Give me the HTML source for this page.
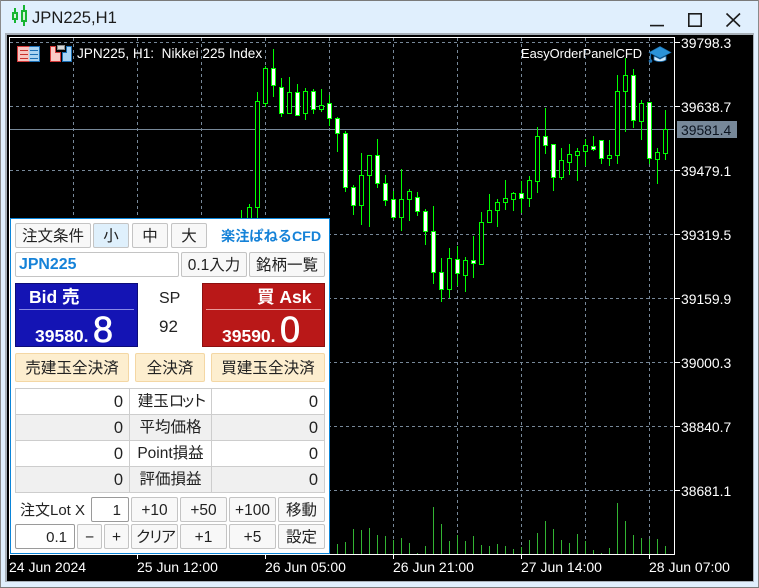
<!DOCTYPE html>
<html lang="ja"><head><meta charset="utf-8"><title>JPN225,H1</title>
<style>
html,body{margin:0;padding:0}
body{width:759px;height:588px;position:relative;overflow:hidden;background:#e0effd;font-family:"Liberation Sans","Noto Sans CJK JP",sans-serif;color:#222}
div{box-sizing:border-box}
.a{position:absolute}
.t{position:absolute;white-space:nowrap;line-height:16px}
.b{position:absolute;display:flex;align-items:center;justify-content:center;background:#f8f8f8;border:1px solid #c4c4c4;border-radius:2px;font-size:15.5px;line-height:1;white-space:nowrap;color:#222;padding-top:2px}
.o{background:#fdeecf;border-color:#f4d7a4;font-size:15.6px}
.c{position:absolute;border:1px solid #cdcdcd;display:flex;align-items:center;font-size:16.5px;line-height:1;white-space:nowrap;color:#222;padding-top:2px}
.n{justify-content:flex-end;padding-right:6px}
.l{justify-content:center;font-size:15.5px;padding-top:1px}
.g{background:#f0f0f0}
.w{background:#fff}
.i{position:absolute;background:#fff;border:1px solid #9a9a9a;border-radius:2px;display:flex;align-items:center;justify-content:flex-end;padding-right:7px;padding-top:2px;font-size:15px;line-height:1;color:#222}
.px{color:#fff;font-size:13.9px}
.dt{color:#fff;font-size:14px}
</style></head>
<body>
<div class="a" style="left:0;top:0;width:759px;height:1px;background:#7a7a7a"></div>
<div class="a" style="left:0;top:0;width:1px;height:588px;background:#8a8a8a"></div>
<div class="a" style="left:758px;top:0;width:1px;height:588px;background:#8a8a8a"></div>
<div class="a" style="left:0;top:587px;width:759px;height:1px;background:#7a7a7a"></div>

<svg class="a" style="left:0;top:0" width="759" height="33" viewBox="0 0 759 33" shape-rendering="crispEdges">
<path d="M15 8V23M24 5V26" stroke="#17b532" stroke-width="2" fill="none"/>
<rect x="13" y="13" width="4" height="6" fill="#d6f5da" stroke="#17b532" stroke-width="2"/>
<rect x="22" y="11" width="4" height="10" fill="#d6f5da" stroke="#17b532" stroke-width="2"/>
<g shape-rendering="geometricPrecision" fill="none" stroke="#1c1c1c" stroke-width="1.6">
<path d="M650 25.6H664"/>
<rect x="688.8" y="13.8" width="12.4" height="12.4"/>
<path d="M726.5 13.5L740 26.5M740 13.5L726.5 26.5"/>
</g>
</svg>
<div class="t" style="left:32px;top:8px;font-size:16.6px;line-height:19px;color:#1c1c1c">JPN225,H1</div>

<div class="a" style="left:5px;top:33px;width:749px;height:549px;background:#a8b0b8"></div>
<div class="a" style="left:7px;top:35px;width:746px;height:546px;background:#000"></div>

<svg class="a" style="left:0;top:0" width="759" height="588" viewBox="0 0 759 588" shape-rendering="crispEdges">
<path d="M10 42.5H674M10 106.5H674M10 170.5H674M10 234.5H674M10 298.5H674M10 362.5H674M10 426.5H674M10 490.5H674" stroke="#778899" stroke-dasharray="3 3" fill="none"/>
<path d="M73.5 38V554M137.5 38V554M201.5 38V554M265.5 38V554M329.5 38V554M393.5 38V554M457.5 38V554M521.5 38V554M585.5 38V554M649.5 38V554" stroke="#778899" stroke-dasharray="3 3" fill="none"/>
<path d="M10 129.5H675" stroke="#778899" fill="none"/>
<path d="M337.5 554V544M345.5 554V542M353.5 554V529M361.5 554V530M369.5 554V528M377.5 554V535M385.5 554V536M393.5 554V540M401.5 554V538M409.5 554V543M417.5 554V553M425.5 554V546M433.5 554V507M441.5 554V524M449.5 554V541M457.5 554V535M465.5 554V541M473.5 554V536M481.5 554V545M489.5 554V546M497.5 554V544M505.5 554V546M513.5 554V549M521.5 554V547M529.5 554V540M537.5 554V533M545.5 554V521M553.5 554V529M561.5 554V540M569.5 554V543M577.5 554V534M585.5 554V541M593.5 554V550M601.5 554V553M609.5 554V548M617.5 554V503M625.5 554V521M633.5 554V535M641.5 554V538M649.5 554V539M657.5 554V539M665.5 554V546" stroke="#32b432" fill="none"/>
<path d="M241.5 210V220M249.5 204V220M257.5 92V220M265.5 66V107M273.5 49V97M281.5 78V117M289.5 77V114M297.5 84V116M305.5 88V120M313.5 89V114M321.5 89V112M329.5 95V126M337.5 117V152M345.5 131V192M353.5 185V215M361.5 153V225M369.5 155V227M377.5 139V188M385.5 175V206M393.5 191V220M401.5 169V231M409.5 189V221M417.5 192V216M425.5 209V245M433.5 206V284M441.5 258V302M449.5 248V298M457.5 246V286M465.5 257V292M473.5 236V278M481.5 212V264M489.5 194V222M497.5 199V227M505.5 180V210M513.5 192V211M521.5 181V213M529.5 176V207M537.5 127V193M545.5 108V154M553.5 144V191M561.5 148V180M569.5 144V175M577.5 148V181M585.5 139V166M593.5 136V151M601.5 140V164M609.5 140V166M617.5 75V164M625.5 58V132M633.5 69V128M641.5 100V140M649.5 102V164M657.5 148V184M665.5 110V160" stroke="#00ff00" fill="none"/>
<path d="M247.5 207.5h4V220h-4zM255.5 101.5h4V207.5h-4zM263.5 68.5h4V103.5h-4zM287.5 92.5h4V113.5h-4zM303.5 91.5h4V113.5h-4zM319.5 105.5h4V109.5h-4zM359.5 175.5h4V205.5h-4zM367.5 155.5h4V175.5h-4zM399.5 199.5h4V217.5h-4zM407.5 191.5h4V199.5h-4zM447.5 258.5h4V289.5h-4zM463.5 260.5h4V275.5h-4zM479.5 222.5h4V264.5h-4zM487.5 210.5h4V222.5h-4zM495.5 202.5h4V210.5h-4zM503.5 198.5h4V202.5h-4zM511.5 193.5h4V199.5h-4zM527.5 180.5h4V198.5h-4zM535.5 136.5h4V181.5h-4zM559.5 160.5h4V177.5h-4zM567.5 154.5h4V162.5h-4zM575.5 151.5h4V155.5h-4zM583.5 145.5h4V151.5h-4zM607.5 155.5h4V158.5h-4zM615.5 91.5h4V155.5h-4zM623.5 75.5h4V91.5h-4zM639.5 103.5h4V121.5h-4zM655.5 152.5h4V159.5h-4zM663.5 129.5h4V153.5h-4z" fill="#000" stroke="#00ff00"/>
<path d="M271.5 68.5h4V85.5h-4zM279.5 87.5h4V113.5h-4zM295.5 92.5h4V115.5h-4zM311.5 91.5h4V109.5h-4zM327.5 103.5h4V118.5h-4zM335.5 118.5h4V133.5h-4zM343.5 133.5h4V187.5h-4zM351.5 187.5h4V205.5h-4zM375.5 155.5h4V183.5h-4zM383.5 183.5h4V200.5h-4zM391.5 199.5h4V217.5h-4zM415.5 197.5h4V211.5h-4zM423.5 211.5h4V231.5h-4zM431.5 231.5h4V272.5h-4zM439.5 272.5h4V289.5h-4zM455.5 259.5h4V273.5h-4zM471.5 260.5h4V263.5h-4zM519.5 193.5h4V198.5h-4zM543.5 136.5h4V145.5h-4zM551.5 144.5h4V177.5h-4zM591.5 146.5h4V149.5h-4zM599.5 140.5h4V158.5h-4zM631.5 75.5h4V120.5h-4zM647.5 102.5h4V158.5h-4z" fill="#fff" stroke="#00ff00"/>
<path d="M9.5 37V554.5H675M9.5 37.5H674.5V555" stroke="#fff" fill="none"/>
<path d="M675 42.5h5M675 106.5h5M675 170.5h5M675 234.5h5M675 298.5h5M675 362.5h5M675 426.5h5M675 490.5h5M9.5 555v4M137.5 555v4M265.5 555v4M393.5 555v4M521.5 555v4M649.5 555v4" stroke="#fff" fill="none"/>
<rect x="17.5" y="46.5" width="22" height="15" fill="#fff" stroke="#d23a3a"/>
<rect x="18" y="47" width="11" height="14" fill="#f7c4c0"/>
<rect x="29" y="47" width="10" height="14" fill="#a9d3f2"/>
<path d="M29.5 46.5H39.5V61.5H29.5" fill="none" stroke="#1c6fb5"/>
<path d="M20 50.5h8M20 54.5h8M20 58.5h8" stroke="#c9302c" fill="none"/>
<path d="M30 50.5h8M30 54.5h8M30 58.5h8" stroke="#1c6fb5" fill="none"/>
<path d="M50.5 46.5H55.5V52.5H60.5V61.5H50.5Z" fill="#fbc9c4" stroke="#d23a3a"/>
<path d="M71.5 46.5H66.5V52.5H62.5V61.5H71.5Z" fill="#a9d5f5" stroke="#1c6fb5"/>
<rect x="57.5" y="45.5" width="7" height="4" fill="#d8d8d8" stroke="#8a8a8a"/>
<g shape-rendering="geometricPrecision">
<path d="M649 52.5L660 46.5L671 52.5L660 58Z" fill="#2b93d8" stroke="#1a6fb0" stroke-width=".6"/>
<path d="M654 56V60C657 62 663 62 666 60V56L660 59Z" fill="#cfe9fb" stroke="#1a6fb0" stroke-width=".8"/>
<path d="M650.5 53V60" stroke="#1a6fb0" stroke-width="1.2" fill="none"/>
<circle cx="650.5" cy="61" r="1.8" fill="#1a6fb0"/>
</g>
</svg>

<div class="t" style="left:77px;top:46px;color:#fff;font-size:13.6px">JPN225, H1:&nbsp; Nikkei 225 Index</div>
<div class="t" style="left:521px;top:46px;color:#fff;font-size:12.9px">EasyOrderPanelCFD</div>

<div class="t px" style="left:681px;top:35px">39798.3</div>
<div class="t px" style="left:681px;top:99px">39638.7</div>
<div class="t px" style="left:681px;top:163px">39479.1</div>
<div class="t px" style="left:681px;top:227px">39319.5</div>
<div class="t px" style="left:681px;top:291px">39159.9</div>
<div class="t px" style="left:681px;top:355px">39000.3</div>
<div class="t px" style="left:681px;top:419px">38840.7</div>
<div class="t px" style="left:681px;top:483px">38681.1</div>
<div class="a" style="left:677px;top:121px;width:60px;height:17px;background:#778899"></div>
<div class="t" style="left:681px;top:122px;font-size:13.9px;color:#0c1420">39581.4</div>

<div class="t dt" style="left:9px;top:559px">24 Jun 2024</div>
<div class="t dt" style="left:137px;top:559px">25 Jun 12:00</div>
<div class="t dt" style="left:265px;top:559px">26 Jun 05:00</div>
<div class="t dt" style="left:393px;top:559px">26 Jun 21:00</div>
<div class="t dt" style="left:521px;top:559px">27 Jun 14:00</div>
<div class="t dt" style="left:649px;top:559px">28 Jun 07:00</div>

<div class="a" style="left:10px;top:218px;width:320px;height:336px;background:#fff;border:1px solid #0a84d8"></div>

<div class="b" style="left:15px;top:223px;width:76px;height:25px">注文条件</div>
<div class="b" style="left:93px;top:223px;width:36px;height:25px;background:#dff0fc">小</div>
<div class="b" style="left:132px;top:223px;width:36px;height:25px">中</div>
<div class="b" style="left:171px;top:223px;width:36px;height:25px">大</div>
<div class="t" style="left:221px;top:229px;font-size:14.2px;font-weight:bold;color:#1582d8">楽注ぱねるCFD</div>

<div class="i" style="left:15px;top:252px;width:164px;height:25px;border-color:#c4c4c4;justify-content:flex-start;padding-left:3px;padding-top:1px;font-weight:bold;color:#1582d8;font-size:15.9px">JPN225</div>
<div class="b" style="left:181px;top:252px;width:66px;height:25px">0.1入力</div>
<div class="b" style="left:249px;top:252px;width:76px;height:25px">銘柄一覧</div>

<div class="a" style="left:15px;top:283px;width:123px;height:64px;background:#1414b4;border:1px solid #0c0c78"></div>
<div class="a" style="left:19px;top:309px;width:115px;height:1px;background:#8a8ae6"></div>
<div class="t" style="left:29px;top:289px;color:#fff;font-size:17.5px;font-weight:bold">Bid 売</div>
<div class="t" style="left:35px;top:328px;color:#fff;font-size:17.5px;font-weight:bold">39580.</div>
<div class="t" style="left:93px;top:311px;color:#fff;font-size:36px;line-height:38px;-webkit-text-stroke:.7px #fff">8</div>

<div class="t" style="left:159px;top:291px;font-size:16px;color:#222">SP</div>
<div class="t" style="left:159px;top:319px;font-size:17px;color:#222">92</div>

<div class="a" style="left:202px;top:283px;width:123px;height:64px;background:#b91818;border:1px solid #8c1010"></div>
<div class="a" style="left:206px;top:309px;width:115px;height:1px;background:#ea9a9a"></div>
<div class="t" style="left:257px;top:289px;color:#fff;font-size:17.5px;font-weight:bold">買 Ask</div>
<div class="t" style="left:222px;top:328px;color:#fff;font-size:17.5px;font-weight:bold">39590.</div>
<div class="t" style="left:280px;top:311px;color:#fff;font-size:36px;line-height:38px;-webkit-text-stroke:.7px #fff">0</div>

<div class="b o" style="left:15px;top:353px;width:114px;height:29px">売建玉全決済</div>
<div class="b o" style="left:135px;top:353px;width:70px;height:29px">全決済</div>
<div class="b o" style="left:211px;top:353px;width:114px;height:29px">買建玉全決済</div>

<div class="c n w" style="left:15px;top:388px;width:115px;height:27px">0</div>
<div class="c l w" style="left:129px;top:388px;width:83px;height:27px">建玉<span style="letter-spacing:-4px">ロット</span></div>
<div class="c n w" style="left:211px;top:388px;width:114px;height:27px">0</div>
<div class="c n g" style="left:15px;top:414px;width:115px;height:27px">0</div>
<div class="c l g" style="left:129px;top:414px;width:83px;height:27px">平均価格</div>
<div class="c n g" style="left:211px;top:414px;width:114px;height:27px">0</div>
<div class="c n w" style="left:15px;top:440px;width:115px;height:27px">0</div>
<div class="c l w" style="left:129px;top:440px;width:83px;height:27px">Point損益</div>
<div class="c n w" style="left:211px;top:440px;width:114px;height:27px">0</div>
<div class="c n g" style="left:15px;top:466px;width:115px;height:27px">0</div>
<div class="c l g" style="left:129px;top:466px;width:83px;height:27px">評価損益</div>
<div class="c n g" style="left:211px;top:466px;width:114px;height:27px">0</div>

<div class="t" style="left:20px;top:503px;font-size:15px">注文Lot X</div>
<div class="i" style="left:91px;top:497px;width:38px;height:25px">1</div>
<div class="b" style="left:131px;top:497px;width:47px;height:25px">+10</div>
<div class="b" style="left:180px;top:497px;width:47px;height:25px">+50</div>
<div class="b" style="left:229px;top:497px;width:47px;height:25px">+100</div>
<div class="b" style="left:278px;top:497px;width:47px;height:25px">移動</div>

<div class="i" style="left:15px;top:524px;width:60px;height:25px">0.1</div>
<div class="b" style="left:77px;top:524px;width:25px;height:25px">−</div>
<div class="b" style="left:104px;top:524px;width:25px;height:25px">+</div>
<div class="b" style="left:131px;top:524px;width:47px;height:25px;letter-spacing:-3px">クリア</div>
<div class="b" style="left:180px;top:524px;width:47px;height:25px">+1</div>
<div class="b" style="left:229px;top:524px;width:47px;height:25px">+5</div>
<div class="b" style="left:278px;top:524px;width:47px;height:25px">設定</div>
</body></html>
